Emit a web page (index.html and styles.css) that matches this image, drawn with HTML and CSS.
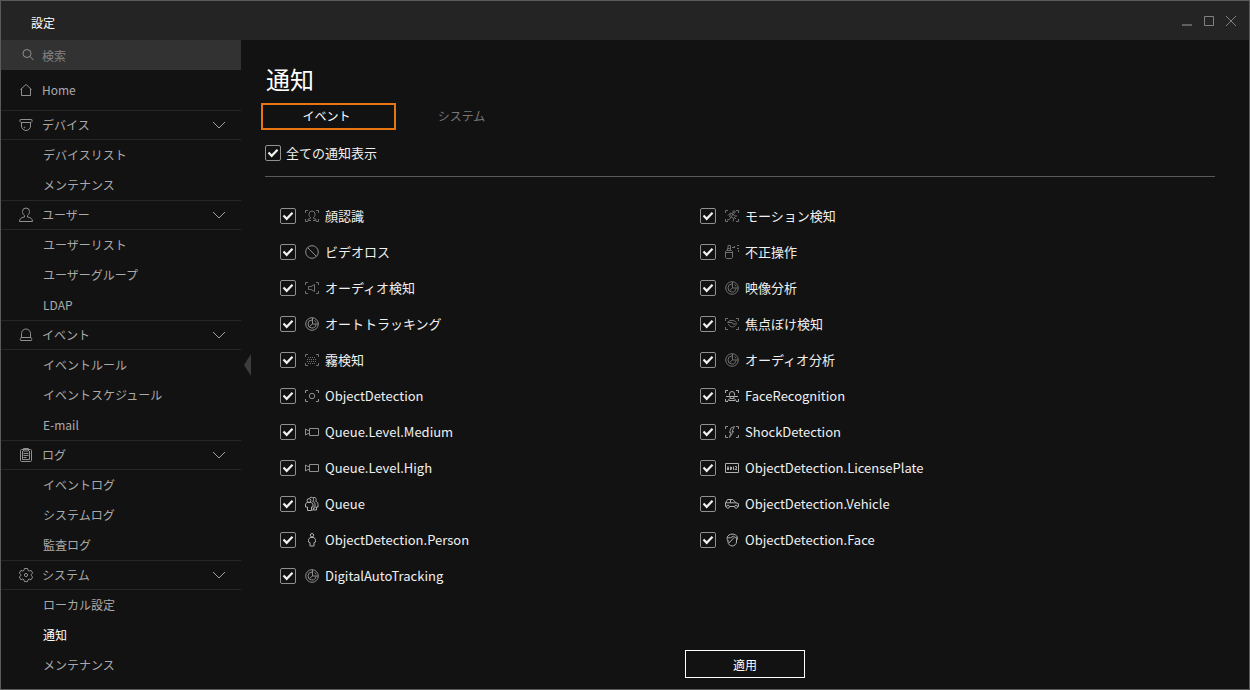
FILE: index.html
```html
<!DOCTYPE html>
<html lang="ja">
<head>
<meta charset="utf-8">
<meta name="viewport" content="width=device-width, initial-scale=1">
<title>設定</title>
<link rel="stylesheet" href="styles.css">
</head>
<body>
<svg class="sprite" aria-hidden="true">
  <symbol id="chevron" viewBox="0 0 14 8"><path d="M1 1l6 6 6-6"/></symbol>
  <symbol id="search" viewBox="0 0 16 16"><circle cx="7" cy="6.500" r="4"/><path d="M10 9.500l3.500 3.500"/></symbol>
  <symbol id="home" viewBox="0 0 16 16"><path d="M2.500 7.500L8 2.500l5.500 5M3.500 7v6.500h9V7"/></symbol>
  <symbol id="device" viewBox="0 0 16 16"><path d="M2.500 2.500h11a.5.5 0 0 1 .5.5v1.500l-1 1h-10l-1-1V3a.5.5 0 0 1 .5-.5zM3.500 5.500V9a4.500 4.500 0 0 0 9 0V5.500"/><circle cx="6.500" cy="10.500" r=".4"/></symbol>
  <symbol id="user" viewBox="0 0 16 16"><path d="M6.500 8.500C5 7.500 4.500 6 4.500 4.500a3.500 3.500 0 0 1 7 0c0 1.500-.5 3-2 4v1.500c3.500.5 5 2 5 4.500h-13c0-2.500 1.500-4 5-4.500z"/></symbol>
  <symbol id="bell" viewBox="0 0 16 16"><path d="M3.500 10.500V6.500a4.500 4.500 0 0 1 9 0v4M3 10.500h10c1 1 1 3 .3 3H2.700c-.7 0-.7-2 .3-3z"/></symbol>
  <symbol id="log" viewBox="0 0 16 16"><rect x="2.500" y="2.500" width="11" height="12" rx="1"/><path d="M5.500 1.500h5v2.500h-5zM5.500 6.500h5M5.500 8.500h5M5.500 10.500h3M4.500 4v8.500h7V4"/></symbol>
  <symbol id="gear" viewBox="0 0 16 16"><path d="M6.400 1.500h3.200l.4 1.900 1.200.7 1.900-.7 1.600 2.800-1.500 1.200v1.300l1.500 1.200-1.600 2.800-1.900-.6-1.200.7-.4 1.800H6.400L6 12.800l-1.200-.7-1.900.6-1.600-2.800 1.500-1.200V7.400L1.300 6.200l1.600-2.800 1.900.7L6 3.400z"/><circle cx="8" cy="8" r="1.600"/></symbol>

  <symbol id="corners" viewBox="0 0 16 16"><path d="M1.500 5V2.500H4M12 2.500h2.500V5M14.500 11v2.500H12M4 13.500H1.500V11"/></symbol>
  <symbol id="face-detect" viewBox="0 0 16 16"><use href="#corners"/><path d="M6.500 9.500C5 8.500 5 7 5 6a3 3 0 0 1 6 0c0 1 0 2.500-1.500 3.500v1l2.500.8v1.200H9M6.500 9.500v1l-2.500.8v1.200h3"/></symbol>
  <symbol id="loss" viewBox="0 0 16 16"><circle cx="8" cy="8" r="6.300"/><path d="M3.500 3.500l9 9"/></symbol>
  <symbol id="audio" viewBox="0 0 16 16"><use href="#corners"/><path d="M10.500 4.500v7l-3.500-2H4.500v-3H7z"/></symbol>
  <symbol id="track" viewBox="0 0 16 16"><circle cx="8" cy="8" r="6.300"/><path d="M8 4a4 4 0 1 0 4 4.500M8.500 2v6H14M8.500 8l-3 2.500M10.500 4.500c.8.500 1.300 1 1.500 2"/></symbol>
  <symbol id="fog" viewBox="0 0 16 16"><use href="#corners"/><path stroke-dasharray="1 1" d="M4 5.500h8M3 7.500h10M3 9.500h10M4 11.500h8"/></symbol>
  <symbol id="object" viewBox="0 0 16 16"><use href="#corners"/><circle cx="8" cy="8" r="2.700"/></symbol>
  <symbol id="camera" viewBox="0 0 16 16"><path d="M5.500 4.500h9v7h-9zM5.500 6.500l-1.500 0-2.500-1.500v6l2.500-1.500h1.500"/></symbol>
  <symbol id="queue" viewBox="0 0 16 16"><circle cx="5" cy="4.500" r="1.900"/><path d="M3.500 6.500h3c1.500 0 2.500 1 2.500 2.500V11H7.500v3.500h-4V11H1.500V9c0-1.500.8-2.500 2-2.500zM5.500 2.300c.5-1.400 3-1.400 3.700 0s.3 2.500-.5 3.200c1.800.5 2.300 1.500 2.300 3V12H9.500v2H8M9 1.800c1.500-1 3.300.2 3.300 1.700 0 .8-.3 1.300-.8 1.700 1.500.5 2.500 1.500 2.500 3.300v2.500h-1.500v3H10"/></symbol>
  <symbol id="person" viewBox="0 0 16 16"><circle cx="8" cy="3.200" r="1.700"/><path d="M7 5.500h2c1.500 0 2.500 1.300 2.500 3V10l-1.500.5v3.500H6v-3.500L4.500 10V8.500c0-1.700 1-3 2.500-3z"/></symbol>
  <symbol id="motion" viewBox="0 0 16 16"><use href="#corners"/><circle cx="10" cy="4" r="1.200"/><path d="M9 6L6.500 5 4 7.500M9 6L7 9l3 1.500-1 3M9 6l1.500 2H13M7 9l-1.500 2.500L3 12M6.500 5.500L5.500 9M10 9l2 2"/></symbol>
  <symbol id="spray" viewBox="0 0 16 16"><path d="M1.500 7.500l1-1h5l1 1v6l-1 1h-5l-1-1zM1.500 8.500h7M3.500 6.500v-2h3v2M4 4.500V1.500h2.500v3"/><path stroke-dasharray="2 2" d="M8 3.500h4M13 1.500h2M13 4.500h2M10.500 2v4M14.500 6v2"/></symbol>
  <symbol id="defocus" viewBox="0 0 16 16"><use href="#corners"/><path d="M3.500 6.500C5 4.500 7 4 8 4.500c2 0 3.500 1 4.500 2M3.500 6.500H8l1 1.500h4M4.500 8c1 3 4.500 4 7 1.500"/></symbol>
  <symbol id="face-rec" viewBox="0 0 16 16"><use href="#corners"/><path d="M5.500 7.500V6a2.500 2.500 0 0 1 5 0v1.500M2 8.500h12M6 9l.5 1.500h3L10 9M4 13c0-1.500 1-2 2.500-2.500M12 13c0-1.500-1-2-2.500-2.500M5 12.500h6"/></symbol>
  <symbol id="shock" viewBox="0 0 16 16"><use href="#corners"/><path d="M10.500 2.500L7 4 5.500 8.500h1.500L5.500 13.500 9.500 7.500H8z"/></symbol>
  <symbol id="plate" viewBox="0 0 16 16"><path d="M1.500 3.500h13v9h-13z"/><path d="M3.500 10V7.500l.5-1 .5 1V10M6.500 6.500V10M7.500 7v2.500M9.500 6.500V10M11 6.500h1.500v1.500L11 9.500h2"/></symbol>
  <symbol id="vehicle" viewBox="0 0 16 16"><path d="M2.300 10.500H1.500V7l2-3.500h5.300L12 6.800l2.500.9v2.800h-.7M5.500 10.500h5M1.500 6.800H12M6.500 3.500v3.300"/><circle cx="3.900" cy="10.700" r="1.500"/><circle cx="12.100" cy="10.700" r="1.500"/></symbol>
  <symbol id="face" viewBox="0 0 16 16"><path d="M4 8v2c0 2 2 4 4.200 4s4.300-2 4.300-4V6.500M4 9C2.500 7.500 2.800 4 5 3c1.500-1.200 5-1.200 6.500 0 2 .7 2.500 4 1 5.500M3.500 5.500c2 1 4 0 6-1.500 1 1.200 2 2 4 2M5 11l5-5.500"/></symbol>
</svg>

<div class="window">
  <header class="titlebar">
    <span class="titlebar-text">設定</span>
    <div class="window-controls">
      <button type="button" aria-label="最小化"><svg class="ctl dim" viewBox="0 0 12 12"><path stroke-width="2" d="M1 10h10"/></svg></button>
      <button type="button" aria-label="最大化"><svg class="ctl" viewBox="0 0 12 12"><path d="M1.500 1.500h9v9h-9z"/></svg></button>
      <button type="button" aria-label="閉じる"><svg class="ctl" viewBox="0 0 12 12"><path d="M1 1l10 10M11 1L1 11"/></svg></button>
    </div>
  </header>

  <div class="body">
    <aside class="sidebar">
      <label class="search"><svg class="icon"><use href="#search"/></svg><input type="search" placeholder="検索" aria-label="検索"></label>
      <nav>
        <a class="home" href="#"><svg class="icon"><use href="#home"/></svg>Home</a>
        <section>
          <button class="group" type="button"><svg class="icon"><use href="#device"/></svg><span>デバイス</span><svg class="chevron"><use href="#chevron"/></svg></button>
          <a class="item" href="#">デバイスリスト</a>
          <a class="item" href="#">メンテナンス</a>
        </section>
        <section>
          <button class="group" type="button"><svg class="icon"><use href="#user"/></svg><span>ユーザー</span><svg class="chevron"><use href="#chevron"/></svg></button>
          <a class="item" href="#">ユーザーリスト</a>
          <a class="item" href="#">ユーザーグループ</a>
          <a class="item" href="#">LDAP</a>
        </section>
        <section>
          <button class="group" type="button"><svg class="icon"><use href="#bell"/></svg><span>イベント</span><svg class="chevron"><use href="#chevron"/></svg></button>
          <a class="item" href="#">イベントルール</a>
          <a class="item" href="#">イベントスケジュール</a>
          <a class="item" href="#">E-mail</a>
        </section>
        <section>
          <button class="group" type="button"><svg class="icon"><use href="#log"/></svg><span>ログ</span><svg class="chevron"><use href="#chevron"/></svg></button>
          <a class="item" href="#">イベントログ</a>
          <a class="item" href="#">システムログ</a>
          <a class="item" href="#">監査ログ</a>
        </section>
        <section>
          <button class="group" type="button"><svg class="icon"><use href="#gear"/></svg><span>システム</span><svg class="chevron"><use href="#chevron"/></svg></button>
          <a class="item" href="#">ローカル設定</a>
          <a class="item current" href="#" aria-current="page">通知</a>
          <a class="item" href="#">メンテナンス</a>
        </section>
      </nav>
      <button class="collapse" type="button" aria-label="メニューを閉じる"></button>
    </aside>

    <main class="content">
      <h1>通知</h1>
      <div class="tabs" role="tablist">
        <button class="tab selected" type="button" role="tab" aria-selected="true">イベント</button>
        <button class="tab" type="button" role="tab" aria-selected="false">システム</button>
      </div>
      <div class="all"><label class="check"><input type="checkbox" checked>全ての通知表示</label></div>
      <ul class="events">
        <li><label class="check"><input type="checkbox" checked><svg class="icon dim"><use href="#face-detect"/></svg>顔認識</label></li>
        <li><label class="check"><input type="checkbox" checked><svg class="icon dim"><use href="#motion"/></svg>モーション検知</label></li>
        <li><label class="check"><input type="checkbox" checked><svg class="icon"><use href="#loss"/></svg>ビデオロス</label></li>
        <li><label class="check"><input type="checkbox" checked><svg class="icon dim"><use href="#spray"/></svg>不正操作</label></li>
        <li><label class="check"><input type="checkbox" checked><svg class="icon dim"><use href="#audio"/></svg>オーディオ検知</label></li>
        <li><label class="check"><input type="checkbox" checked><svg class="icon dim"><use href="#track"/></svg>映像分析</label></li>
        <li><label class="check"><input type="checkbox" checked><svg class="icon"><use href="#track"/></svg>オートトラッキング</label></li>
        <li><label class="check"><input type="checkbox" checked><svg class="icon dim"><use href="#defocus"/></svg>焦点ぼけ検知</label></li>
        <li><label class="check"><input type="checkbox" checked><svg class="icon dim"><use href="#fog"/></svg>霧検知</label></li>
        <li><label class="check"><input type="checkbox" checked><svg class="icon dim"><use href="#track"/></svg>オーディオ分析</label></li>
        <li><label class="check"><input type="checkbox" checked><svg class="icon"><use href="#object"/></svg>ObjectDetection</label></li>
        <li><label class="check"><input type="checkbox" checked><svg class="icon bright"><use href="#face-rec"/></svg>FaceRecognition</label></li>
        <li><label class="check"><input type="checkbox" checked><svg class="icon"><use href="#camera"/></svg>Queue.Level.Medium</label></li>
        <li><label class="check"><input type="checkbox" checked><svg class="icon"><use href="#shock"/></svg>ShockDetection</label></li>
        <li><label class="check"><input type="checkbox" checked><svg class="icon"><use href="#camera"/></svg>Queue.Level.High</label></li>
        <li><label class="check"><input type="checkbox" checked><svg class="icon bright"><use href="#plate"/></svg>ObjectDetection.LicensePlate</label></li>
        <li><label class="check"><input type="checkbox" checked><svg class="icon bright"><use href="#queue"/></svg>Queue</label></li>
        <li><label class="check"><input type="checkbox" checked><svg class="icon bright"><use href="#vehicle"/></svg>ObjectDetection.Vehicle</label></li>
        <li><label class="check"><input type="checkbox" checked><svg class="icon bright"><use href="#person"/></svg>ObjectDetection.Person</label></li>
        <li><label class="check"><input type="checkbox" checked><svg class="icon bright"><use href="#face"/></svg>ObjectDetection.Face</label></li>
        <li><label class="check"><input type="checkbox" checked><svg class="icon"><use href="#track"/></svg>DigitalAutoTracking</label></li>
      </ul>
      <footer class="actions"><button class="apply" type="button">適用</button></footer>
    </main>
  </div>
</div>
</body>
</html>
```

FILE: styles.css
```css
* { box-sizing: border-box; }

body {
  margin: 0;
  background: #121212;
  color: #f0f0f0;
  font: 12px/18px "Noto Sans CJK JP", "Noto Sans", sans-serif;
}

button, input { font: inherit; color: inherit; }
button { margin: 0; padding: 0; border: 0; background: none; cursor: pointer; }
a { color: inherit; text-decoration: none; }

.sprite { position: absolute; width: 0; height: 0; }

.window {
  display: flex;
  flex-direction: column;
  min-height: 100vh;
  border: 1px solid #5a5a5a;
}

.titlebar {
  display: flex;
  justify-content: space-between;
  height: 39px;
  padding: 0 7px 0 30px;
  background: #242424;
}
.titlebar-text { padding-top: 13px; color: #fff; }
.window-controls { display: flex; }
.window-controls button { display: grid; place-items: center; width: 22px; }
.ctl { width: 12px; height: 12px; fill: none; stroke: #808080; }
.ctl.dim { stroke: #606060; }

.body { display: flex; flex: 1; }

.sidebar { position: relative; flex: none; width: 240px; color: #aaa; }

.icon { flex: none; width: 16px; height: 16px; fill: none; stroke: #909090; stroke-width: 1; }
.icon.dim { stroke: #707070; }
.icon.bright { stroke: #b0b0b0; }

.search {
  display: flex;
  align-items: center;
  gap: 6px;
  height: 30px;
  padding: 0 19px;
  background: #323232;
}
.search input {
  flex: 1;
  min-width: 0;
  padding: 2px 0 0;
  border: 0;
  outline: 0;
  background: none;
}
.search input::placeholder { color: #828282; opacity: 1; }

.home { display: flex; align-items: center; gap: 8px; height: 40px; padding: 0 17px; }

.group {
  display: flex;
  align-items: center;
  gap: 8px;
  width: 100%;
  height: 30px;
  padding: 0 15px 0 17px;
  border: solid #262626;
  border-width: 1px 0;
  text-align: left;
}
.group span { flex: 1; }
.chevron { width: 14px; height: 8px; fill: none; stroke: #a0a0a0; }

.item { display: flex; align-items: center; height: 30px; padding-left: 42px; }
.item.current { color: #fff; }

.collapse {
  position: absolute;
  top: 314px;
  right: -10px;
  width: 7px;
  height: 22px;
  background: #3c3c3c;
  clip-path: polygon(100% 0, 100% 100%, 0 50%);
}

.content {
  display: flex;
  flex: 1;
  flex-direction: column;
  min-width: 0;
  padding: 21px 34px 11px 24px;
}

h1 { margin: 0; padding-left: 1px; color: #fff; font-size: 24px; font-weight: 400; line-height: 36px; }

.tabs { display: flex; margin: 6px 0 0 -4px; }
.tab { width: 135px; height: 27px; padding: 0 4px 2px 0; color: #787878; }
.tab.selected { border: 2px solid #e87511; color: #fff; }

.all { padding: 14px 0 11px; border-bottom: 1px solid #5a5a5a; font-size: 13px; }

.check { display: inline-flex; align-items: center; }
.check input {
  appearance: none;
  flex: none;
  width: 16px;
  height: 16px;
  margin: 0 5px 0 0;
  border: 1px solid #909090;
  border-radius: 2px;
}
.check input:checked {
  background: border-box url("data:image/svg+xml,%3Csvg xmlns='http://www.w3.org/2000/svg' viewBox='0 0 16 16'%3E%3Cpath d='M3.500 7.500l3.200 3.300 5.800-6' fill='none' stroke='%23f0f0f0' stroke-width='2.200'/%3E%3C/svg%3E");
}

.events {
  display: grid;
  grid-template-columns: repeat(2, minmax(0, 420px));
  margin: 0;
  padding: 21px 0 0 15px;
  list-style: none;
  font-size: 13px;
}
.events li { display: flex; height: 36px; }
.events .check input { margin-right: 8px; }
.events .icon { margin-right: 5px; }

.actions { display: flex; justify-content: center; margin-top: auto; padding-left: 10px; }
.apply { width: 120px; height: 28px; padding-top: 1px; border: 1px solid #fff; color: #fff; }
```
